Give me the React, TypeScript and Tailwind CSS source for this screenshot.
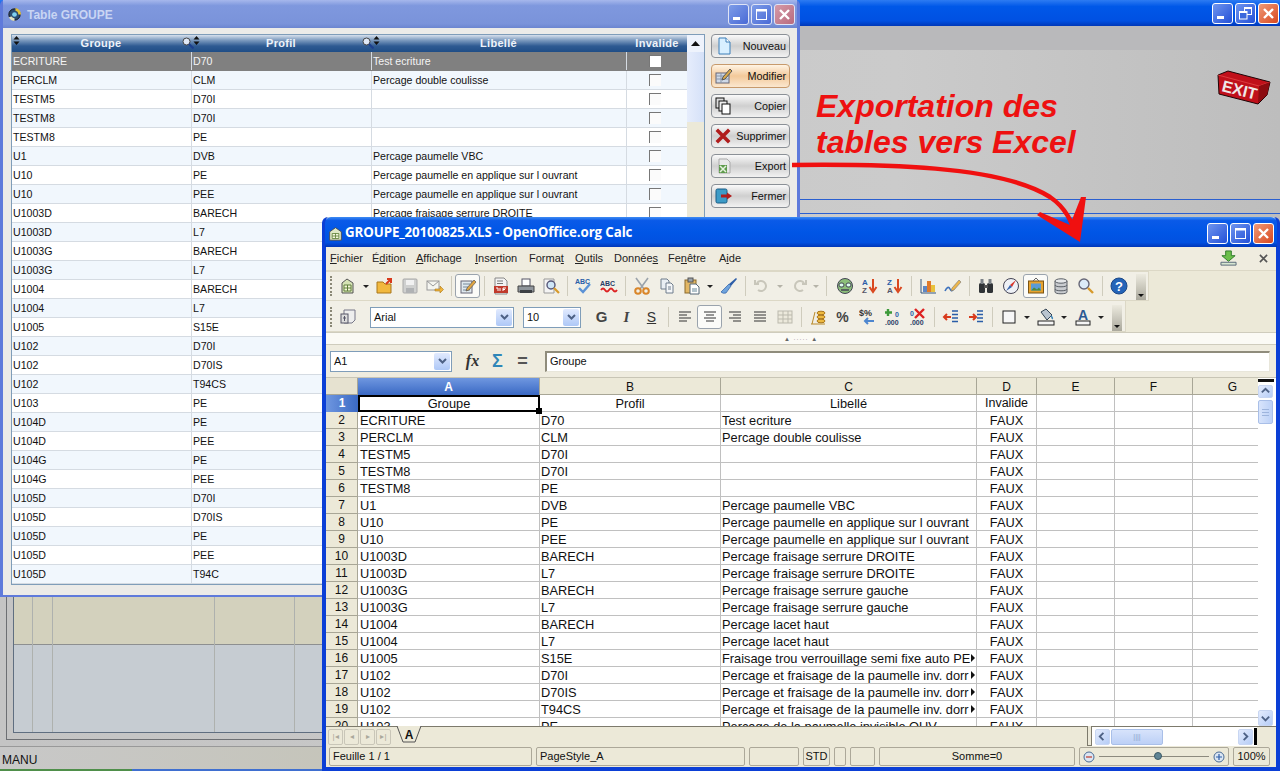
import type { ReactNode } from "react";

const rows: [string, string, string][] = [
  ["ECRITURE", "D70", "Test ecriture"],
  ["PERCLM", "CLM", "Percage double coulisse"],
  ["TESTM5", "D70I", ""],
  ["TESTM8", "D70I", ""],
  ["TESTM8", "PE", ""],
  ["U1", "DVB", "Percage paumelle VBC"],
  ["U10", "PE", "Percage paumelle en applique sur l ouvrant"],
  ["U10", "PEE", "Percage paumelle en applique sur l ouvrant"],
  ["U1003D", "BARECH", "Percage fraisage serrure DROITE"],
  ["U1003D", "L7", "Percage fraisage serrure DROITE"],
  ["U1003G", "BARECH", "Percage fraisage serrure gauche"],
  ["U1003G", "L7", "Percage fraisage serrure gauche"],
  ["U1004", "BARECH", "Percage lacet haut"],
  ["U1004", "L7", "Percage lacet haut"],
  ["U1005", "S15E", "Fraisage trou verrouillage semi fixe auto PE"],
  ["U102", "D70I", "Percage et fraisage de la paumelle inv. dorr"],
  ["U102", "D70IS", "Percage et fraisage de la paumelle inv. dorr"],
  ["U102", "T94CS", "Percage et fraisage de la paumelle inv. dorr"],
  ["U103", "PE", "Percage de la paumelle invisible OUV"],
  ["U104D", "PE", ""],
  ["U104D", "PEE", ""],
  ["U104G", "PE", ""],
  ["U104G", "PEE", ""],
  ["U105D", "D70I", ""],
  ["U105D", "D70IS", ""],
  ["U105D", "PE", ""],
  ["U105D", "PEE", ""],
  ["U105D", "T94C", ""],
];

function Svg({ children, className = "w-[18px] h-[18px]" }: { children: ReactNode; className?: string }) {
  return (
    <svg viewBox="0 0 18 18" className={className}>
      {children}
    </svg>
  );
}

function Caption({ kind, tone }: { kind: "min" | "max" | "restore" | "close"; tone: "pale" | "xp" }) {
  const bg =
    kind === "close"
      ? tone === "pale"
        ? "bg-[linear-gradient(135deg,#d59aa8,#b86a7e)] border-[#dfe4f6]"
        : "bg-[linear-gradient(135deg,#ee9a78,#d9481f)] border-white"
      : tone === "pale"
        ? "bg-[linear-gradient(135deg,#7d9ce8,#4a6ad6)] border-[#dfe4f6]"
        : "bg-[linear-gradient(135deg,#6f95ee,#2350d8)] border-white";
  return (
    <div className={`w-[21px] h-[21px] rounded-[3px] border flex items-center justify-center ${bg}`}>
      <svg viewBox="0 0 19 19" className="w-[19px] h-[19px]" fill="none" stroke="white">
        {kind === "min" && <rect x="4" y="12" width="7" height="3" fill="white" stroke="none" />}
        {kind === "max" && (
          <>
            <rect x="4.5" y="5.5" width="10" height="9" strokeWidth="1" />
            <rect x="4" y="4" width="11" height="2.5" fill="white" stroke="none" />
          </>
        )}
        {kind === "restore" && (
          <>
            <rect x="8.5" y="3.5" width="7" height="7" />
            <rect x="3.5" y="7.5" width="7.5" height="7.5" fill="#3a68dc" />
            <rect x="3" y="7" width="8" height="2" fill="white" stroke="none" />
            <rect x="8" y="3" width="8" height="2" fill="white" stroke="none" />
          </>
        )}
        {kind === "close" && <path d="M5 5l9 9M14 5l-9 9" strokeWidth="2.4" />}
      </svg>
    </div>
  );
}

function SideButton({ icon, label, hot }: { icon: ReactNode; label: string; hot?: boolean }) {
  return (
    <div
      className={`w-[79px] h-[24px] rounded-[4px] border flex items-center justify-between pl-[3px] pr-[3px] text-[10.8px] text-[#111] ${
        hot
          ? "border-[#c79a6c] bg-[linear-gradient(180deg,#fff4e4,#f3c99a_50%,#fbe7cf)]"
          : "border-[#8b9096] bg-[linear-gradient(180deg,#fafafa,#cfcfcf_50%,#f2f2f2)]"
      }`}
    >
      {icon}
      <span>{label}</span>
    </div>
  );
}

function SortMark() {
  return (
    <svg viewBox="0 0 7 9" className="w-[7px] h-[9px] absolute left-[1px] top-[1px]">
      <path d="M3.5 0l3 3.4H.5zM3.5 9l-3-3.6h6z" fill="#111" />
    </svg>
  );
}

function Lens() {
  return (
    <svg viewBox="0 0 12 12" className="w-[12px] h-[12px] absolute right-[-2px] top-[2px] z-10">
      <circle cx="4.500" cy="4.500" r="3.500" fill="#dfe8f7" stroke="#444" />
      <path d="M7 7l4.500 4.500" stroke="#1c3f8f" strokeWidth="2.200" />
    </svg>
  );
}

function TableWindow() {
  return (
    <div className="absolute left-0 top-0 w-[800px] h-[597px] flex flex-col border-x-[3px] border-b-[2px] border-[#5f7adb] rounded-t-[5px] bg-[#ecebe8]">
      <div className="h-[28px] shrink-0 flex items-center pl-[3px] pr-[2px] pt-[1px] bg-[linear-gradient(180deg,#a6b7ec,#7f98de_20%,#7a93da_85%,#6b85d0)]">
        <svg viewBox="0 0 18 18" className="w-[17px] h-[17px]">
          <circle cx="9" cy="9" r="6" fill="#2b4b6f" stroke="#111" />
          <circle cx="9" cy="9" r="2.500" fill="#7fd0f0" />
          <path d="M10 2a7 7 0 0 1 6 7h-3a4 4 0 0 0-3-4z" fill="#e3c13c" />
          <path d="M3 12a7 7 0 0 0 6 4v-3a4 4 0 0 1-3-2z" fill="#e3e3c0" />
        </svg>
        <span className="ml-[4px] text-[12px] font-bold text-[#c9d5f3]">Table GROUPE</span>
        <div className="ml-auto flex gap-[2px]">
          <Caption kind="min" tone="pale" />
          <Caption kind="max" tone="pale" />
          <Caption kind="close" tone="pale" />
        </div>
      </div>
      <div className="flex pl-[8px] pt-[6px] min-h-0">
        <div className="w-[694px] h-[551px] shrink-0 border border-[#7f9db9] flex bg-white">
          <div className="w-[675px] flex flex-col">
            <div className="h-[17px] shrink-0 grid grid-cols-[180px_180px_255px_60px] text-[11px] tracking-[0.3px] font-bold text-[#eef3fa] bg-[linear-gradient(180deg,#d7e0ec,#7e9cc0_30%,#2e5a92_65%,#1f4d86)]">
              {["Groupe", "Profil", "Libellé", "Invalide"].map((h, i) => (
                <div key={h} className="relative flex items-center justify-center">
                  {i < 3 && <SortMark />}
                  {i < 2 && <Lens />}
                  <span className={i === 3 ? "" : "pr-[2px]"}>{h}</span>
                </div>
              ))}
            </div>
            {rows.map((r, i) => (
              <div
                key={i}
                className={`h-[19px] shrink-0 grid grid-cols-[180px_180px_255px_60px] text-[10.6px] leading-[18px] border-b ${
                  i === 0
                    ? "bg-[#808080] text-[#f4f4f4] border-[#808080]"
                    : i % 2
                      ? "bg-[#f1f7fd] text-[#111] border-[#d5dbe2]"
                      : "bg-white text-[#111] border-[#d5dbe2]"
                }`}
              >
                <div className="pl-[1px] border-r border-[#d5dbe2]">{r[0]}</div>
                <div className="pl-[1px] border-r border-[#d5dbe2]">{r[1]}</div>
                <div className="pl-[1px] border-r border-[#d5dbe2]">{r[2]}</div>
                <div className="flex items-center justify-center pr-[4px]">
                  <div
                    className={`w-[12px] h-[12px] border-l border-t border-[#777] ${
                      i === 0 ? "bg-white" : "bg-[#fbfbfb]"
                    }`}
                  />
                </div>
              </div>
            ))}
          </div>
          <div className="w-[17px] flex flex-col bg-[#ece9d8]">
            <div className="h-[17px] bg-[#eef3fc] flex items-center justify-center">
              <svg viewBox="0 0 9 5" className="w-[9px] h-[5px]">
                <path d="M4.500 0l4.500 5H0z" fill="#111" />
              </svg>
            </div>
            <div className="h-[70px] bg-[linear-gradient(90deg,#e6edfc,#d5e1f8)]" />
          </div>
        </div>
        <div className="ml-[6px] flex flex-col gap-[6px]">
          <SideButton
            label="Nouveau"
            icon={
              <Svg>
                <path d="M4 1h7l4 4v12H4z" fill="#d8efff" stroke="#3c7fb8" />
                <path d="M11 1v4h4" fill="#fff" stroke="#3c7fb8" />
              </Svg>
            }
          />
          <SideButton
            hot
            label="Modifier"
            icon={
              <Svg>
                <rect x="1" y="6" width="13" height="10" fill="#cfd9e8" stroke="#667" />
                <path d="M1 9h13M1 12h13M6 6v10" stroke="#8895a8" />
                <path d="M8 10l7-8 2 2-7 8-3 1z" fill="#d8a84a" stroke="#555" />
              </Svg>
            }
          />
          <SideButton
            label="Copier"
            icon={
              <Svg>
                <rect x="1" y="1" width="8" height="10" fill="#ddd" stroke="#111" />
                <rect x="4" y="4" width="8" height="10" fill="#eee" stroke="#111" />
                <rect x="7" y="7" width="8" height="10" fill="#fff" stroke="#111" />
              </Svg>
            }
          />
          <SideButton
            label="Supprimer"
            icon={
              <Svg className="w-[16px] h-[18px]">
                <path d="M2 2l14 14M16 2L2 16" stroke="#b01c1c" strokeWidth="4" />
              </Svg>
            }
          />
          <SideButton
            label="Export"
            icon={
              <Svg>
                <path d="M4 2h8l3 3v11H4z" fill="#e8e8e8" stroke="#aaa" />
                <rect x="4" y="8" width="8" height="8" fill="#5e9a4c" />
                <path d="M5 9l6 6M11 9l-6 6" stroke="#e6f3df" strokeWidth="1.500" />
              </Svg>
            }
          />
          <SideButton
            label="Fermer"
            icon={
              <Svg>
                <rect x="1" y="2" width="11" height="14" rx="1.500" fill="#3d9bc7" stroke="#1b5d86" />
                <path d="M6 9h7" stroke="#b01c1c" strokeWidth="3" />
                <path d="M12 5.500L17 9l-5 3.500z" fill="#b01c1c" />
              </Svg>
            }
          />
        </div>
      </div>
    </div>
  );
}

function ToolBtn({ children, active }: { children?: ReactNode; active?: boolean }) {
  return (
    <div
      className={`w-[25px] h-[24px] shrink-0 flex items-center justify-center rounded-[3px] ${
        active ? "bg-[#fbfbf8] border border-[#9aa3ad]" : ""
      }`}
    >
      {children}
    </div>
  );
}

function Sep() {
  return (
    <div className="w-[8px] h-[20px] shrink-0 flex justify-center">
      <div className="w-px h-full bg-[#cfccbd]" />
    </div>
  );
}

function Arr({ dim, w = "w-[12px]" }: { dim?: boolean; w?: string }) {
  return (
    <div className={`${w} shrink-0 flex justify-center`}>
      <div
        className={`w-0 h-0 border-x-[3px] border-x-transparent border-t-[3px] ${
          dim ? "border-t-[#b5b3a8]" : "border-t-[#222]"
        }`}
      />
    </div>
  );
}

function Grip() {
  return <div className="w-[2px] h-[20px] mx-[3px] shrink-0 border-l-2 border-dotted border-[#8a8877]" />;
}

function Overflow() {
  return (
    <div className="w-[10px] h-[26px] ml-[5px] shrink-0 self-end bg-[linear-gradient(180deg,#eceadf,#aaa89c)] flex items-end justify-center pb-[3px]">
      <div className="w-0 h-0 border-x-[3px] border-x-transparent border-t-[3px] border-t-[#111]" />
    </div>
  );
}

function Combo({ text, className }: { text: string; className: string }) {
  return (
    <div className={`h-[21px] shrink-0 bg-white border border-[#7f9db9] flex items-center justify-between pl-[3px] pr-[1px] text-[11px] text-[#111] ${className}`}>
      <span>{text}</span>
      <div className="w-[16px] h-[17px] rounded-[2px] bg-[linear-gradient(180deg,#e1eafe,#aec8f7)] flex items-center justify-center">
        <svg viewBox="0 0 9 6" className="w-[9px] h-[6px]">
          <path d="M1 1l3.500 3.500L8 1" fill="none" stroke="#4d6185" strokeWidth="2" />
        </svg>
      </div>
    </div>
  );
}

function MainToolbar() {
  return (
    <div className="h-[30px] flex items-center">
      <div className="w-[823px] h-full flex items-center pl-[1px] border-y border-r border-[#dcd8c6] bg-[#f1efe6]">
        <Grip />
        <ToolBtn>
          <Svg>
            <path d="M3 6l5-4 6 4v10H3z" fill="#d6e3b5" stroke="#555" />
            <path d="M5 8h7v6H5zM5 11h7M8.500 8v6" fill="#f4f6d8" stroke="#5f7f3a" />
          </Svg>
        </ToolBtn>
        <Arr />
        <ToolBtn>
          <Svg>
            <path d="M1 5h6l2 2h6v9H1z" fill="#f1b83e" stroke="#a9761b" />
            <path d="M10 7l5-5M11 2h4v4" stroke="#d83a1c" strokeWidth="2" fill="none" />
          </Svg>
        </ToolBtn>
        <ToolBtn>
          <Svg>
            <rect x="2" y="2" width="14" height="14" rx="1" fill="#cfd0cf" stroke="#a9a9a9" />
            <rect x="5" y="3" width="8" height="5" fill="#f1f1f1" />
            <rect x="5" y="11" width="8" height="5" fill="#b0b2b4" />
          </Svg>
        </ToolBtn>
        <ToolBtn>
          <Svg>
            <rect x="1" y="4" width="12" height="9" fill="#f5f5f0" stroke="#999" />
            <path d="M1 4l6 5 6-5" fill="none" stroke="#999" />
            <path d="M9 12h5V9l3.500 3.500L14 16v-2H9z" fill="#f0b43a" stroke="#a9761b" strokeWidth=".6" />
          </Svg>
        </ToolBtn>
        <Sep />
        <ToolBtn active>
          <Svg>
            <rect x="2" y="4" width="11" height="12" fill="#dfe8ee" stroke="#667" />
            <path d="M4 7h7M4 10h5M4 13h7" stroke="#789" />
            <path d="M8 11l7-8 2 2-7 8-3 1z" fill="#e0a542" stroke="#555" strokeWidth=".7" />
          </Svg>
        </ToolBtn>
        <Sep />
        <ToolBtn>
          <Svg>
            <path d="M3 1h9l3 3v13H3z" fill="#f2f2f2" stroke="#888" />
            <rect x="2" y="9" width="14" height="7" fill="#c0392b" />
            <path d="M5 4h6M5 6.500h6" stroke="#777" />
            <path d="M4 11h2v3M8 11v3M11 11h3M11 12.500h2M11 11v3" stroke="#fff" fill="none" />
          </Svg>
        </ToolBtn>
        <ToolBtn>
          <Svg>
            <rect x="5" y="2" width="8" height="7" fill="#fff" stroke="#556" />
            <path d="M1 9h16v6H1z" fill="#8f959c" stroke="#444" />
            <rect x="3" y="13" width="12" height="3" fill="#3c4045" />
          </Svg>
        </ToolBtn>
        <ToolBtn>
          <Svg>
            <path d="M2 2h10v14H2z" fill="#f4f4f4" stroke="#999" />
            <circle cx="9" cy="8" r="4" fill="#cfe6f7" stroke="#557" strokeWidth="1.400" />
            <path d="M12 11l5 5" stroke="#d79a2c" strokeWidth="2.200" />
          </Svg>
        </ToolBtn>
        <Sep />
        <ToolBtn>
          <Svg>
            <text x="0" y="7" fontSize="7" fontWeight="700" fill="#2a5da8" fontFamily="Liberation Sans">ABC</text>
            <path d="M4 11l4 4 7-8" stroke="#5b92d6" strokeWidth="2.400" fill="none" />
          </Svg>
        </ToolBtn>
        <ToolBtn>
          <Svg>
            <text x="0" y="9" fontSize="7" fontWeight="700" fill="#2a3d66" fontFamily="Liberation Sans">ABC</text>
            <path d="M1 13q2-3 4 0t4 0 4 0 4 0" stroke="#d22" strokeWidth="1.800" fill="none" />
          </Svg>
        </ToolBtn>
        <Sep />
        <ToolBtn>
          <Svg>
            <path d="M3 1l8 11M15 1L7 12" stroke="#9aa3ab" strokeWidth="1.600" />
            <circle cx="5" cy="14" r="2.800" fill="none" stroke="#d9862a" strokeWidth="2" />
            <circle cx="13" cy="14" r="2.800" fill="none" stroke="#d9862a" strokeWidth="2" />
          </Svg>
        </ToolBtn>
        <ToolBtn>
          <Svg>
            <path d="M3 2h6l2 2v8H3z" fill="#e9eef3" stroke="#6f7d8c" />
            <path d="M8 6h5l2 2v8H8z" fill="#f5f7f9" stroke="#6f7d8c" />
            <path d="M10 10h3M10 12h3" stroke="#6f7d8c" />
          </Svg>
        </ToolBtn>
        <ToolBtn>
          <Svg>
            <rect x="2" y="3" width="11" height="13" fill="#e2b765" stroke="#8a6a2c" />
            <rect x="5" y="1" width="5" height="4" fill="#9aa3ab" stroke="#555" />
            <path d="M7 7h6l3 3v7H7z" fill="#fff" stroke="#567" />
            <path d="M9 12h5M9 14h5" stroke="#689" />
          </Svg>
        </ToolBtn>
        <Arr />
        <ToolBtn>
          <Svg>
            <path d="M16 1l1 1-6 7-2-2z" fill="#2d5ea8" />
            <path d="M9 7l2 2-5 7q-3 1-5-1z" fill="#6fa3dc" stroke="#2d5ea8" strokeWidth=".7" />
          </Svg>
        </ToolBtn>
        <Sep />
        <ToolBtn>
          <Svg>
            <path d="M4 6a5 5 0 1 1 1 7M2 3v4h4" fill="none" stroke="#c8c6ba" strokeWidth="2" />
          </Svg>
        </ToolBtn>
        <Arr dim />
        <ToolBtn>
          <Svg>
            <path d="M14 6a5 5 0 1 0-1 7M16 3v4h-4" fill="none" stroke="#c8c6ba" strokeWidth="2" />
          </Svg>
        </ToolBtn>
        <Arr dim w="w-[9px]" />
        <div className="w-[12px] h-[20px] shrink-0 flex justify-center">
          <div className="w-px h-full bg-[#cfccbd]" />
        </div>
        <ToolBtn>
          <Svg>
            <circle cx="9" cy="9" r="7.500" fill="#8cbf7a" stroke="#445" />
            <rect x="3" y="6" width="5" height="4" rx="2" fill="#dfe" stroke="#445" />
            <rect x="10" y="6" width="5" height="4" rx="2" fill="#dfe" stroke="#445" />
            <path d="M5 13h8" stroke="#445" strokeWidth="1.500" />
          </Svg>
        </ToolBtn>
        <ToolBtn>
          <Svg>
            <text x="1" y="8" fontSize="8" fontWeight="700" fill="#2a5da8" fontFamily="Liberation Sans">A</text>
            <text x="1" y="16" fontSize="8" fontWeight="700" fill="#556" fontFamily="Liberation Sans">Z</text>
            <path d="M12 2v11M8.500 10l3.500 5 3.500-5" stroke="#d9481f" strokeWidth="2" fill="none" />
          </Svg>
        </ToolBtn>
        <ToolBtn>
          <Svg>
            <text x="1" y="8" fontSize="8" fontWeight="700" fill="#2a5da8" fontFamily="Liberation Sans">Z</text>
            <text x="1" y="16" fontSize="8" fontWeight="700" fill="#556" fontFamily="Liberation Sans">A</text>
            <path d="M12 2v11M8.500 10l3.500 5 3.500-5" stroke="#d9481f" strokeWidth="2" fill="none" />
          </Svg>
        </ToolBtn>
        <Sep />
        <ToolBtn>
          <Svg>
            <path d="M2 2v14h15" fill="none" stroke="#33557f" />
            <rect x="4" y="9" width="4" height="6" fill="#5f86c4" />
            <rect x="8" y="4" width="4" height="11" fill="#e0792a" />
            <rect x="12" y="8" width="4" height="7" fill="#e8c13c" />
          </Svg>
        </ToolBtn>
        <ToolBtn>
          <Svg>
            <path d="M1 14q3-6 5-2t4-1" fill="none" stroke="#3e72bd" strokeWidth="1.600" />
            <path d="M8 11l7-8 2 2-7 8-3 1z" fill="#edb64a" stroke="#777" strokeWidth=".6" />
          </Svg>
        </ToolBtn>
        <Sep />
        <ToolBtn>
          <Svg>
            <rect x="2" y="6" width="6" height="10" rx="1.500" fill="#2f3336" />
            <rect x="10" y="6" width="6" height="10" rx="1.500" fill="#2f3336" />
            <rect x="3.500" y="2" width="3" height="5" fill="#7c8287" />
            <rect x="11.500" y="2" width="3" height="5" fill="#7c8287" />
            <rect x="7" y="8" width="4" height="3" fill="#555" />
          </Svg>
        </ToolBtn>
        <ToolBtn>
          <Svg>
            <circle cx="9" cy="9" r="7.500" fill="#eef1f6" stroke="#445" />
            <path d="M14 3L8 8l2 2z" fill="#d8372c" />
            <path d="M4 14l4-6 2 2z" fill="#3764ad" />
          </Svg>
        </ToolBtn>
        <ToolBtn active>
          <Svg>
            <rect x="1.500" y="4" width="15" height="12" fill="#e8a32f" stroke="#7b5514" />
            <rect x="4" y="6.500" width="10" height="7" fill="#5b9bd5" />
            <path d="M4 13.500l3-3 3 2 2-2 2 3z" fill="#4d8a3c" />
            <path d="M6 4l3-3 3 3" fill="none" stroke="#666" />
          </Svg>
        </ToolBtn>
        <ToolBtn>
          <Svg>
            <path d="M3 4v11c0 2.400 12 2.400 12 0V4" fill="#c9ccd0" stroke="#5a5f66" />
            <ellipse cx="9" cy="4" rx="6" ry="2.200" fill="#e6e8ea" stroke="#5a5f66" />
            <path d="M3 8c0 2.400 12 2.400 12 0M3 12c0 2.400 12 2.400 12 0" fill="none" stroke="#5a5f66" />
          </Svg>
        </ToolBtn>
        <ToolBtn>
          <Svg>
            <circle cx="7" cy="7" r="5" fill="#dcebf8" stroke="#667" strokeWidth="1.400" />
            <path d="M11 11l5 5" stroke="#d79a2c" strokeWidth="2.400" />
          </Svg>
        </ToolBtn>
        <Sep />
        <ToolBtn>
          <svg viewBox="0 0 18 18" className="w-[18px] h-[18px]">
            <circle cx="9" cy="9" r="8" fill="#2464b8" stroke="#1b4787" />
            <text x="9" y="14" textAnchor="middle" fontSize="13" fontWeight="700" fill="#fff" fontFamily="Liberation Sans">?</text>
          </svg>
        </ToolBtn>
        <Overflow />
      </div>
    </div>
  );
}

function AlignIcon({ mode }: { mode: "left" | "center" | "right" | "justify" }) {
  const lines = {
    left: "M3 4h12M3 7h8M3 10h12M3 13h8",
    center: "M3 4h12M5 7h8M3 10h12M5 13h8",
    right: "M3 4h12M7 7h8M3 10h12M7 13h8",
    justify: "M3 4h12M3 7h12M3 10h12M3 13h12",
  }[mode];
  return (
    <Svg>
      <path d={lines} stroke="#333" strokeWidth="1.200" />
    </Svg>
  );
}

function FormatToolbar() {
  return (
    <div className="h-[31px] flex items-center">
      <div className="w-[800px] h-full flex items-center pl-[1px] pt-[2px] border-b border-r border-[#dcd8c6] bg-[#f1efe6]">
        <Grip />
        <ToolBtn>
          <Svg>
            <path d="M5 2h11v10l-3 3H5z" fill="#eee" stroke="#778" />
            <rect x="2" y="6" width="7" height="9" fill="#dcdcdc" stroke="#556" />
            <path d="M5.500 8v5M4 10h3" stroke="#556" />
          </Svg>
        </ToolBtn>
        <div className="w-[10px] shrink-0" />
        <Combo text="Arial" className="w-[144px]" />
        <div className="w-[9px] shrink-0" />
        <Combo text="10" className="w-[58px]" />
        <div className="w-[8px] shrink-0" />
        <ToolBtn><span className="font-bold text-[15px] text-[#444]">G</span></ToolBtn>
        <ToolBtn><span className="font-bold italic text-[15px] font-['Liberation_Serif',serif] text-[#444]">I</span></ToolBtn>
        <ToolBtn><span className="text-[14px] underline text-[#333]">S</span></ToolBtn>
        <Sep />
        <ToolBtn><AlignIcon mode="left" /></ToolBtn>
        <ToolBtn active><AlignIcon mode="center" /></ToolBtn>
        <ToolBtn><AlignIcon mode="right" /></ToolBtn>
        <ToolBtn><AlignIcon mode="justify" /></ToolBtn>
        <ToolBtn>
          <Svg>
            <rect x="2" y="3" width="14" height="12" fill="#ece9dc" stroke="#bbb9ad" />
            <path d="M2 7h14M2 11h14M7 3v12M12 3v12" stroke="#bbb9ad" />
          </Svg>
        </ToolBtn>
        <Sep />
        <ToolBtn>
          <Svg>
            <path d="M2 16h14M3 16l3-12" stroke="#b98a2a" />
            <ellipse cx="12" cy="5" rx="4" ry="1.800" fill="#eeb93f" stroke="#a9761b" />
            <ellipse cx="12" cy="9" rx="4" ry="1.800" fill="#eeb93f" stroke="#a9761b" />
            <ellipse cx="12" cy="13" rx="4" ry="1.800" fill="#eeb93f" stroke="#a9761b" />
          </Svg>
        </ToolBtn>
        <ToolBtn><span className="font-bold text-[14px] text-[#444]">%</span></ToolBtn>
        <ToolBtn>
          <Svg>
            <text x="0" y="8" fontSize="9" fontWeight="700" fill="#333" fontFamily="Liberation Sans">$%</text>
            <path d="M15 13H6M9 10l-3 3 3 3" stroke="#4d86cf" strokeWidth="2" fill="none" />
          </Svg>
        </ToolBtn>
        <ToolBtn>
          <Svg>
            <path d="M4 1v7M1 4.500h7" stroke="#3d9a3a" strokeWidth="2.400" />
            <text x="11" y="9" fontSize="7" fontWeight="700" fill="#2a5da8" fontFamily="Liberation Sans">0</text>
            <text x="1" y="17" fontSize="7" fontWeight="700" fill="#2a3d66" fontFamily="Liberation Sans">.000</text>
          </Svg>
        </ToolBtn>
        <ToolBtn>
          <Svg>
            <text x="1" y="8" fontSize="7" fontWeight="700" fill="#2a5da8" fontFamily="Liberation Sans">0</text>
            <text x="1" y="17" fontSize="7" fontWeight="700" fill="#2a3d66" fontFamily="Liberation Sans">.000</text>
            <path d="M6 1l9 9M15 1l-9 9" stroke="#d22" strokeWidth="2.400" />
          </Svg>
        </ToolBtn>
        <Sep />
        <ToolBtn>
          <Svg>
            <path d="M9 9H2M5 6L2 9l3 3" stroke="#d83a1c" strokeWidth="2" fill="none" />
            <path d="M10 3h6M10 6.500h6M10 10h6M10 13.500h6" stroke="#2a5da8" strokeWidth="1.400" />
          </Svg>
        </ToolBtn>
        <ToolBtn>
          <Svg>
            <path d="M2 9h7M6 6l3 3-3 3" stroke="#d83a1c" strokeWidth="2" fill="none" />
            <path d="M10 3h6M10 6.500h6M10 10h6M10 13.500h6" stroke="#2a5da8" strokeWidth="1.400" />
          </Svg>
        </ToolBtn>
        <Sep />
        <ToolBtn>
          <Svg>
            <rect x="3" y="3" width="12" height="12" fill="#f7f7f7" stroke="#222" />
          </Svg>
        </ToolBtn>
        <Arr w="w-[12px]" />
        <ToolBtn>
          <Svg>
            <path d="M4 4l5-3 6 6-5 5z" fill="#b9c4cf" stroke="#345" />
            <path d="M14 8q2 2 1 3" stroke="#3d86b8" strokeWidth="1.600" fill="none" />
            <rect x="1" y="13" width="16" height="4" fill="#f5f5f5" stroke="#222" />
          </Svg>
        </ToolBtn>
        <Arr w="w-[12px]" />
        <ToolBtn>
          <Svg>
            <text x="9" y="12" textAnchor="middle" fontSize="14" fontWeight="700" fill="#2b5a94" fontFamily="Liberation Sans">A</text>
            <rect x="2" y="13" width="14" height="4" fill="#f5f5f5" stroke="#222" />
          </Svg>
        </ToolBtn>
        <Arr w="w-[12px]" />
        <Overflow />
      </div>
    </div>
  );
}

const menu: [string, string, string, string][] = [
  ["", "F", "ichier", "w-[42px]"],
  ["É", "d", "ition", "w-[44px]"],
  ["", "A", "ffichage", "w-[59px]"],
  ["", "I", "nsertion", "w-[54px]"],
  ["Forma", "t", "", "w-[46px]"],
  ["", "O", "utils", "w-[39px]"],
  ["Donnée", "s", "", "w-[54px]"],
  ["Fe", "n", "être", "w-[51px]"],
  ["A", "i", "de", "w-[30px]"],
];

function ScrollBtn({ dir, h = "h-[16px]" }: { dir: "up" | "down" | "left" | "right"; h?: string }) {
  const d = { up: "M2 7l4-4 4 4", down: "M2 4l4 4 4-4", left: "M7 2L3 6l4 4", right: "M4 2l4 4-4 4" }[dir];
  return (
    <div className={`w-[15px] ${h} shrink-0 rounded-[2px] bg-[linear-gradient(135deg,#e3ebfd,#b6cdf6)] border border-[#c8d6f2] flex items-center justify-center`}>
      <svg viewBox="0 0 12 12" className="w-[11px] h-[11px]">
        <path d={d} fill="none" stroke="#4d6185" strokeWidth="2" />
      </svg>
    </div>
  );
}

function Sheet() {
  const colA = "w-[182px]";
  const colB = "w-[181px]";
  const colC = "w-[256px]";
  const colD = "w-[60px]";
  const colE = "w-[78px]";
  const colG = "w-[65px]";
  return (
    <div className="h-[348px] flex bg-white overflow-hidden">
      <div className="w-[932px] shrink-0 text-[12.8px] leading-[17px] text-[#111]">
        <div className="h-[17px] flex text-[12px] leading-[19px] text-center bg-[#ece9d8]">
          <div className="w-[32px] border-b border-r border-[#a8a696] bg-[#e6e2d0]" />
          <div className={`${colA} bg-[linear-gradient(180deg,#6f97e0,#3a69c4)] text-white font-bold border-r border-[#a8a696]`}>A</div>
          <div className={`${colB} border-r border-b border-[#a8a696]`}>B</div>
          <div className={`${colC} border-r border-b border-[#a8a696]`}>C</div>
          <div className={`${colD} border-r border-b border-[#a8a696]`}>D</div>
          <div className={`${colE} border-r border-b border-[#a8a696]`}>E</div>
          <div className={`${colE} border-r border-b border-[#a8a696]`}>F</div>
          <div className={`${colG} pl-[14px] border-b border-[#a8a696]`}>G</div>
        </div>
        <div className="h-[17px] flex">
          <div className="w-[32px] bg-[linear-gradient(90deg,#6f97e0,#3a69c4)] text-white font-bold text-[12px] text-center">1</div>
          <div className={`${colA} relative text-center border-[2px] border-black leading-[13px] z-10`}>
            Groupe
            <div className="absolute right-[-4px] bottom-[-4px] w-[6px] h-[6px] bg-black" />
          </div>
          <div className={`${colB} text-center border-r border-b border-[#c0c0c0]`}>Profil</div>
          <div className={`${colC} text-center border-r border-b border-[#c0c0c0]`}>Libellé</div>
          <div className={`${colD} text-center border-r border-b border-[#c0c0c0] text-[12.5px]`}>Invalide</div>
          <div className={`${colE} border-r border-b border-[#c0c0c0]`} />
          <div className={`${colE} border-r border-b border-[#c0c0c0]`} />
          <div className={`${colG} border-b border-[#c0c0c0]`} />
        </div>
        {rows.slice(0, 19).map((r, i) => (
          <div key={i} className="h-[17px] flex">
            <div className="w-[32px] bg-[#ece9d8] border-r border-b border-[#a8a696] text-[12px] text-center">{i + 2}</div>
            <div className={`${colA} pl-[2px] border-r border-b border-[#c0c0c0]`}>{r[0]}</div>
            <div className={`${colB} pl-[1px] border-r border-b border-[#c0c0c0]`}>{r[1]}</div>
            <div className={`${colC} relative pl-[1px] border-r border-b border-[#c0c0c0] overflow-hidden whitespace-nowrap`}>
              {r[2]}
              {i >= 14 && i <= 17 && (
                <div className="absolute right-0 top-0 h-[16px] w-[5px] bg-white flex items-center">
                  <div className="w-0 h-0 border-y-[4px] border-y-transparent border-l-[4px] border-l-[#111]" />
                </div>
              )}
            </div>
            <div className={`${colD} text-center border-r border-b border-[#c0c0c0]`}>FAUX</div>
            <div className={`${colE} border-r border-b border-[#c0c0c0]`} />
            <div className={`${colE} border-r border-b border-[#c0c0c0]`} />
            <div className={`${colG} border-b border-[#c0c0c0]`} />
          </div>
        ))}
      </div>
      <div className="w-[16px] shrink-0 flex flex-col bg-white">
        <div className="h-[3px] mt-[1px] bg-[#111] shrink-0" />
        <div className="h-[3px] shrink-0" />
        <ScrollBtn dir="up" h="h-[13px]" />
        <div className="h-[2px] shrink-0" />
        <div className="w-[15px] h-[24px] shrink-0 rounded-[2px] bg-[linear-gradient(90deg,#d8e4fb,#bcd1f7)] border border-[#a9bfe8] flex items-center justify-center">
          <div className="w-[7px] h-[7px] border-y border-[#9db4dd] bg-[linear-gradient(180deg,transparent_40%,#9db4dd_40%,#9db4dd_60%,transparent_60%)]" />
        </div>
        <div className="flex-1" />
        <ScrollBtn dir="down" />
      </div>
    </div>
  );
}

function StatusCell({ className, children }: { className: string; children?: ReactNode }) {
  return (
    <div className={`h-[19px] shrink-0 border border-[#aca899] rounded-[2px] flex items-center text-[11px] text-[#111] ${className}`}>
      {children}
    </div>
  );
}

function CalcWindow() {
  return (
    <div className="absolute left-[322px] top-[217px] w-[958px] h-[554px] flex flex-col border-x-[4px] border-b-[4px] border-[#0b3fd6] rounded-t-[6px] bg-[#ece9d8]">
      <div className="h-[30px] shrink-0 -mx-[1px] flex items-center pl-[3px] pr-[3px] pt-[2px] rounded-t-[6px] bg-[linear-gradient(180deg,#3f8cf3,#0a5ae8_12%,#0056e6_50%,#0150e0_85%,#0036b8)]">
        <Svg className="w-[15px] h-[15px]">
          <path d="M2 7l7-5 7 5v10H2z" fill="#dfe8c7" stroke="#444" />
          <path d="M5 9h8v6H5zM5 12h8M9 9v6" fill="#f4f7de" stroke="#5f7f3a" />
        </Svg>
        <span className="ml-[2px] text-[13.3px] font-bold text-white font-['Open_Sans',sans-serif] tracking-[-0.1px]">
          GROUPE_20100825.XLS - OpenOffice.org Calc
        </span>
        <div className="ml-auto flex gap-[2px]">
          <Caption kind="min" tone="xp" />
          <Caption kind="max" tone="xp" />
          <Caption kind="close" tone="xp" />
        </div>
      </div>
      <div className="h-[24px] shrink-0 flex items-center pl-[4px] pr-[8px] text-[11px] text-[#222] bg-[#efecdf] border-b border-[#dcd8c6]">
        {menu.map(([a, u, b, w], i) => (
          <span key={i} className={`${w} shrink-0`}>
            {a}
            <u>{u}</u>
            {b}
          </span>
        ))}
        <div className="ml-auto flex items-center gap-[22px]">
          <Svg className="w-[17px] h-[17px]">
            <path d="M6 1h6v5h4l-7 6-7-6h4z" fill="#6cbf4a" stroke="#2f7a2a" />
            <path d="M1 13h16v3H1z" fill="#d7e6d2" stroke="#567" />
          </Svg>
          <svg viewBox="0 0 10 10" className="w-[9px] h-[9px]">
            <path d="M1 1l8 8M9 1L1 9" stroke="#555" strokeWidth="1.800" />
          </svg>
        </div>
      </div>
      <MainToolbar />
      <FormatToolbar />
      <div className="h-[13px] shrink-0 border-y border-[#cfccbd] bg-[#fbfaf5] flex items-center justify-center text-[6px] leading-none text-[#666] tracking-[1px]">
        ▲ ····· ▲
      </div>
      <div className="h-[33px] shrink-0 flex items-center pl-[4px] pr-[6px] bg-[#efecdf] border-b border-[#c8c5b5]">
        <Combo text="A1" className="w-[122px]" />
        <div className="w-[8px] shrink-0" />
        <ToolBtn>
          <span className="font-['Liberation_Serif',serif] italic font-bold text-[16px] text-[#333]">fx</span>
        </ToolBtn>
        <ToolBtn>
          <span className="text-[18px] font-bold text-[#2f86b8]">Σ</span>
        </ToolBtn>
        <ToolBtn>
          <span className="text-[18px] font-bold text-[#555]">=</span>
        </ToolBtn>
        <div className="w-[10px] shrink-0" />
        <div className="flex-1 h-[21px] bg-white border-l-2 border-t-2 border-[#8f8c7c] border-r border-b border-r-[#e8e6da] border-b-[#e8e6da] pl-[3px] text-[11px] leading-[17px] text-[#111]">
          Groupe
        </div>
      </div>
      <Sheet />
      <div className="h-[20px] shrink-0 flex border-t border-[#7d7a6c] bg-[#ece9d8]">
        <div className="w-[70px] shrink-0 flex items-center pl-[2px] gap-[1px] bg-[#ece9d8]">
          {["|◂", "◂", "▸", "▸|"].map((t) => (
            <div key={t} className="w-[15px] h-[16px] border border-[#c9c6b8] rounded-[2px] text-[8px] leading-[13px] text-center text-[#aaa89b]">
              {t}
            </div>
          ))}
        </div>
        <svg viewBox="0 0 26 18" className="w-[26px] h-[18px] -mt-[1px] shrink-0">
          <path d="M1 0l6 16h12l6-16" fill="#ece9d8" stroke="#555" />
          <text x="13" y="13" textAnchor="middle" fontSize="12" fontWeight="700" fontFamily="Liberation Sans" fill="#111">A</text>
        </svg>
        <div className="flex-1" />
        <div className="w-[5px] h-[20px] -mt-[1px] border-x border-b border-[#7d7a6c] bg-[#ece9d8]" />
        <div className="w-[165px] h-[19px] shrink-0 bg-white flex items-center pl-[3px]">
          <ScrollBtn dir="left" />
          <div className="w-[52px] h-[16px] mx-[1px] rounded-[2px] bg-[linear-gradient(180deg,#d7e3fb,#bcd0f6)] border border-[#a9bfe8] text-center text-[7px] leading-[14px] text-[#8ba3cc]">
            ||||
          </div>
          <div className="flex-1" />
          <ScrollBtn dir="right" />
          <div className="w-[3px] h-[17px] ml-[1px] bg-black" />
        </div>
        <div className="w-[19px] shrink-0" />
      </div>
      <div className="h-[21px] shrink-0 flex items-start pt-[1px] pl-[3px] gap-[4px] bg-[#ece9d8]">
        <StatusCell className="w-[203px] pl-[3px]">Feuille 1 / 1</StatusCell>
        <StatusCell className="w-[209px] pl-[3px]">PageStyle_A</StatusCell>
        <StatusCell className="w-[50px]" />
        <StatusCell className="w-[27px] justify-center">STD</StatusCell>
        <StatusCell className="w-[12px]" />
        <StatusCell className="w-[25px]" />
        <StatusCell className="w-[196px] justify-center">Somme=0</StatusCell>
        <StatusCell className="w-[150px] px-[3px] gap-[4px]">
          <svg viewBox="0 0 12 12" className="w-[12px] h-[12px] shrink-0">
            <circle cx="6" cy="6" r="5" fill="#dbe6f3" stroke="#4a6b94" />
            <path d="M3 6h6" stroke="#c0392b" strokeWidth="1.200" />
          </svg>
          <div className="relative flex-1 h-px bg-[#8c8a7e]">
            <div className="absolute left-1/2 top-[-4px] w-[8px] h-[8px] rounded-full bg-[#5f8595] border border-[#3b5a66]" />
          </div>
          <svg viewBox="0 0 12 12" className="w-[12px] h-[12px] shrink-0">
            <circle cx="6" cy="6" r="5" fill="#dbe6f3" stroke="#4a6b94" />
            <path d="M3 6h6M6 3v6" stroke="#2d5ea8" strokeWidth="1.200" />
          </svg>
        </StatusCell>
        <StatusCell className="w-[37px] justify-center">100%</StatusCell>
      </div>
    </div>
  );
}

function Backdrop() {
  return (
    <div className="w-full h-full flex flex-col bg-[#c9c9c9]">
      <div className="h-[26px] shrink-0 flex justify-end items-center pr-[1px] gap-[2px] bg-[linear-gradient(180deg,#2d7bf2,#0058e8_25%,#0050e2_80%,#0038b8)]">
        <Caption kind="min" tone="xp" />
        <Caption kind="restore" tone="xp" />
        <Caption kind="close" tone="xp" />
      </div>
      <div className="h-[24px] shrink-0 bg-[#b9b9bb]" />
      <div className="flex-1 relative bg-[linear-gradient(90deg,#c4c4c4,#cbcbcb_70%,#bdbdbd)]">
        <div className="absolute left-[800px] right-0 top-[149px] h-[15px] border-t border-b border-[#2a5fd0]" />
        <div className="absolute left-[6px] right-[958px] top-[547px] h-[143px] border-l border-b border-[#6d6f73] pl-[6px] pb-[6px]">
          <div className="w-full h-full border-l border-b border-[#5f6e80] flex flex-col relative">
            <div className="h-[47px] bg-[#d3d1bd]" />
            <div className="flex-1 border-t border-[#8d8f90] bg-[#c6ccd2]" />
            <div className="absolute left-[18px] top-0 bottom-0 w-px bg-[#aeb1ae]" />
            <div className="absolute left-[38px] top-0 bottom-0 w-px bg-[#aeb1ae]" />
            <div className="absolute left-[200px] top-0 bottom-0 w-px bg-[#aeb1ae]" />
            <div className="absolute left-[280px] top-0 bottom-0 w-px bg-[#aeb1ae]" />
          </div>
        </div>
        <div className="absolute left-0 right-0 bottom-[2px] h-[23px] border-t border-[#999] bg-[linear-gradient(90deg,#c8c8c8,#c4c3b3_40%)] pl-[2px] text-[12px] leading-[26px] text-[#111]">
          MANU
        </div>
        <div className="absolute left-0 w-[132px] bottom-0 h-[2px] bg-[#4f8f4a]" />
        <div className="absolute left-[132px] right-0 bottom-0 h-[2px] bg-[#3f6fd0]" />
      </div>
    </div>
  );
}

function ExitSign() {
  return (
    <svg viewBox="0 0 75 50" className="absolute left-[1205px] top-[62px] w-[75px] h-[50px]">
      <path d="M13 13L23 9l42 11-3 13-9 9-39-10z" fill="#c0101a" stroke="#1e0406" strokeWidth="1" />
      <path d="M13 13l41 11 11-4" fill="none" stroke="#e24848" strokeWidth=".8" />
      <path d="M54 24l-1 17 9-8 3-13z" fill="#8c0b10" />
      <text
        x="16"
        y="29"
        fontSize="16"
        fontWeight="700"
        fontFamily="Liberation Sans"
        fill="#efe8e8"
        transform="rotate(14 16 29)"
      >
        EXIT
      </text>
    </svg>
  );
}

function Annotation() {
  return (
    <>
      <div className="absolute left-[816px] top-[88px] text-[32px] leading-[36px] font-bold italic text-[#ee1111]">
        Exportation des
        <br />
        tables vers Excel
      </div>
      <svg viewBox="0 0 1280 771" className="absolute inset-0 w-[1280px] h-[771px] pointer-events-none">
        <path d="M792 165C880 164 1000 165 1050 197C1066 208 1072 222 1076 236" fill="none" stroke="#f01010" strokeWidth="4.500" />
        <path d="M1037 215L1040 212L1070 225L1081 197L1086 197L1080 242Z" fill="#f01010" />
      </svg>
    </>
  );
}

export default function App() {
  return (
    <div className="relative w-[1280px] h-[771px] overflow-hidden font-['Liberation_Sans',Arial,sans-serif]">
      <Backdrop />
      <ExitSign />
      <TableWindow />
      <CalcWindow />
      <Annotation />
    </div>
  );
}
